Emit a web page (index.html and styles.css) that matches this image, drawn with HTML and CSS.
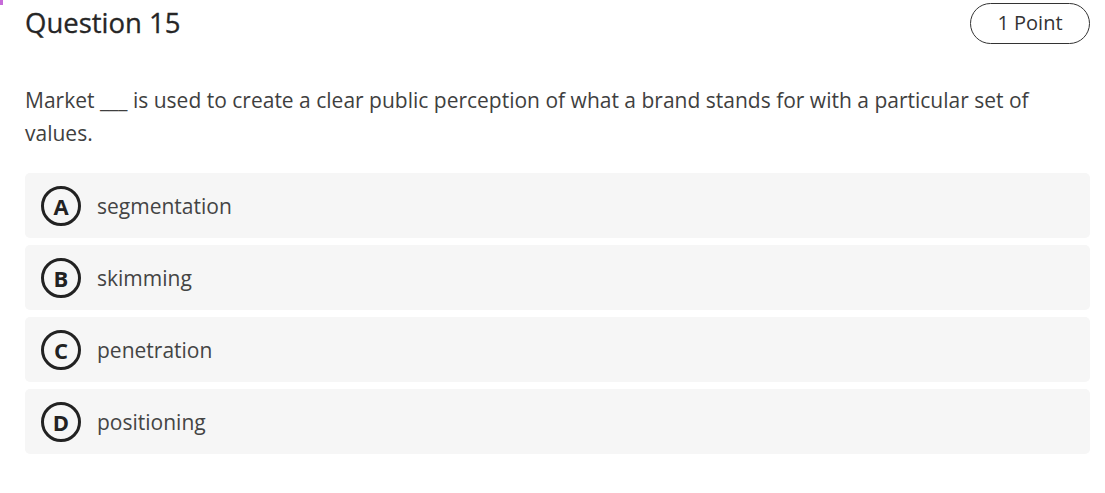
FILE: index.html
```html
<!DOCTYPE html>
<html lang="en">
<head>
<meta charset="utf-8">
<title>Question 15</title>
<link rel="stylesheet" href="styles.css">
</head>
<body>
<div class="focus-mark"></div>
<main class="question">
  <header class="q-header">
    <h2 class="q-title">Question 15</h2>
    <span class="q-points">1 Point</span>
  </header>
  <p class="q-text">Market ___ is used to create a clear public perception of what a brand stands for with a particular set of values.</p>
  <ul class="options">
    <li class="option"><span class="badge">A</span><span class="label">segmentation</span></li>
    <li class="option"><span class="badge">B</span><span class="label">skimming</span></li>
    <li class="option"><span class="badge">C</span><span class="label">penetration</span></li>
    <li class="option"><span class="badge">D</span><span class="label">positioning</span></li>
  </ul>
</main>
</body>
</html>
```

FILE: styles.css
```css
html, body {
  margin: 0;
  padding: 0;
  background: #ffffff;
}
body {
  font-family: "Open Sans", "Noto Sans", sans-serif;
  color: #333333;
  position: relative;
}
.focus-mark {
  position: absolute;
  left: 0;
  top: 0;
  width: 3px;
  height: 5px;
  background: #c66bd8;
}
.question {
  padding: 3px 15px 0 25px;
}
.q-header {
  display: flex;
  justify-content: space-between;
  align-items: center;
  height: 41px;
}
.q-title {
  margin: 0;
  font-size: 27.5px;
  font-weight: 500;
  color: #262626;
  line-height: 36px;
  position: relative;
  top: -1px;
  -webkit-text-stroke: 0.3px #262626;
}
.q-points {
  box-sizing: border-box;
  width: 120px;
  height: 41px;
  border: 1px solid #333333;
  border-radius: 21px;
  font-size: 20px;
  line-height: 38px;
  text-align: center;
  color: #333333;
}
.q-text {
  margin: 40px 0 0 0;
  font-size: 21px;
  line-height: 33px;
  color: #3f3f3f;
}
.options {
  list-style: none;
  margin: 23px 0 0 0;
  padding: 0;
  display: flex;
  flex-direction: column;
  gap: 7px;
}
.option {
  display: flex;
  align-items: center;
  height: 65px;
  background: #f6f6f6;
  border-radius: 5px;
  padding-left: 16px;
}
.badge {
  box-sizing: border-box;
  flex: 0 0 auto;
  width: 40px;
  height: 40px;
  border: 3px solid #222222;
  border-radius: 50%;
  display: flex;
  align-items: center;
  justify-content: center;
  font-size: 22px;
  font-weight: 700;
  color: #222222;
  margin-right: 16px;
}
.label {
  font-size: 21px;
  color: #444444;
}
```
